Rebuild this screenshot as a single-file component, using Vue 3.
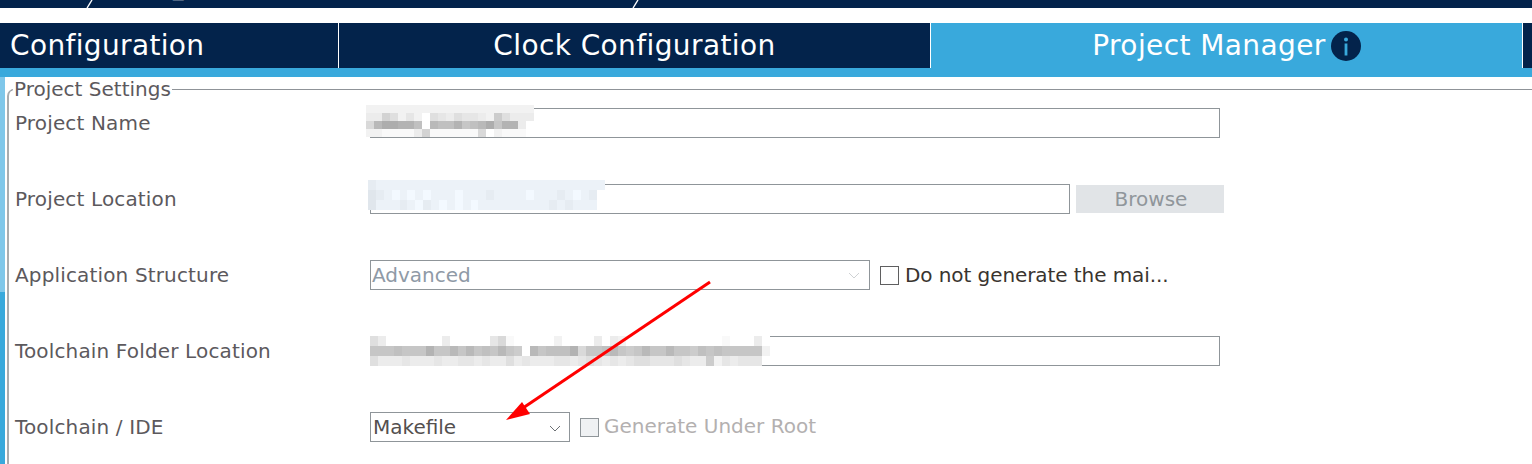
<script setup>
// blurred-out values: each char is a lightness step, '.' is a see-through cell
const toGray = (ch) => Math.round(160 + parseInt(ch, 16) * 6.33)

const blurs = {
  name: {
    cls: 'blur--name',
    tint: 0,
    rows: [
      'ddddddddddddddddddddd',
      'cc8adbdfabcabbcd7accc',
      '9422335f45536542633cf',
      'ddeeeec8eeeeee9fdeeef',
    ],
  },
  location: {
    cls: 'blur--location',
    tint: 6,
    rows: [
      'cddddddddddddddddddddddddddddd',
      'bcdedededddedddcddddedddcdedc.',
      'bdddcdecdedededddddddddcdcddd.',
    ],
  },
  toolchain: {
    cls: 'blur--toolchain',
    tint: 0,
    rows: [
      'acfffffffcfffffb9efffffdffffcfcdffffffffffffefffcf',
      '6665666366464656467f46555396654676466466756566666d',
      'acccbcccbccbbcbccacbcccbbcbabcbcbaabbbabcc7dbcbbb.',
    ],
  },
}

const cellColor = (ch, tint) => {
  if (ch === '.') return 'transparent'
  const g = toGray(ch)
  return `rgb(${g - tint}, ${g}, ${Math.min(255, g + tint)})`
}
</script>

<template>
  <div class="page">
    <div class="crumbs">
      <svg class="crumbs__chevron" width="8" height="8" viewBox="0 0 8 8"><path d="M6 0 L1 8" /></svg>
      <span class="crumbs__text">led_blinkpwm.ioc - Project <span class="crumbs__last">Manager</span></span>
      <svg class="crumbs__chevron crumbs__chevron--end" width="8" height="8" viewBox="0 0 8 8"><path d="M6 0 L1 8" /></svg>
    </div>

    <nav class="tabs">
      <div class="tab tab--config">Configuration</div>
      <div class="tab tab--clock">Clock Configuration</div>
      <div class="tab tab--active">
        <span>Project Manager</span>
        <svg class="tab__info" width="30" height="30" viewBox="0 0 30 30">
          <ellipse cx="15" cy="15" rx="15" ry="15" fill="#03234b" />
          <circle cx="15" cy="8.5" r="2" fill="#39a9dc" />
          <rect x="13.6" y="12.5" width="2.8" height="12" fill="#39a9dc" />
        </svg>
      </div>
      <div class="tab tab--rest"></div>
    </nav>
    <div class="tabs-strip"></div>

    <div class="body">
      <div class="rail">
        <div class="rail__top"></div>
        <div class="rail__bottom"></div>
      </div>

      <fieldset class="settings">
        <legend class="settings__legend">Project Settings</legend>

        <div class="row">
          <label class="row__label">Project Name</label>
          <div class="field field--wide">
            <div :class="['blur', blurs.name.cls]">
              <div v-for="(row, r) in blurs.name.rows" :key="r" class="blur__row">
                <span v-for="(c, i) in row" :key="i" class="blur__cell" :style="{ background: cellColor(c, blurs.name.tint) }"></span>
              </div>
            </div>
          </div>
        </div>

        <div class="row">
          <label class="row__label">Project Location</label>
          <div class="field field--location">
            <div :class="['blur', blurs.location.cls]">
              <div v-for="(row, r) in blurs.location.rows" :key="r" class="blur__row">
                <span v-for="(c, i) in row" :key="i" class="blur__cell" :style="{ background: cellColor(c, blurs.location.tint) }"></span>
              </div>
            </div>
          </div>
          <button class="browse" type="button">Browse</button>
        </div>

        <div class="row">
          <label class="row__label">Application Structure</label>
          <div class="field field--advanced select">
            <span class="select__value select__value--off">Advanced</span>
            <svg class="select__arrow" width="12" height="7" viewBox="0 0 12 7"><path d="M1 1 L6 6 L11 1" stroke="#cfd2d4" /></svg>
          </div>
          <span class="check"></span>
          <span class="check__label">Do not generate the mai...</span>
        </div>

        <div class="row">
          <label class="row__label">Toolchain Folder Location</label>
          <div class="field field--wide">
            <div :class="['blur', blurs.toolchain.cls]">
              <div v-for="(row, r) in blurs.toolchain.rows" :key="r" class="blur__row">
                <span v-for="(c, i) in row" :key="i" class="blur__cell" :style="{ background: cellColor(c, blurs.toolchain.tint) }"></span>
              </div>
            </div>
          </div>
        </div>

        <div class="row">
          <label class="row__label">Toolchain / IDE</label>
          <div class="field field--ide select">
            <span class="select__value">Makefile</span>
            <svg class="select__arrow select__arrow--ide" width="12" height="7" viewBox="0 0 12 7"><path d="M1 1 L6 6 L11 1" stroke="#6c7074" /></svg>
          </div>
          <span class="check check--off"></span>
          <span class="check__label check__label--off">Generate Under Root</span>
        </div>
      </fieldset>
    </div>

    <svg class="arrow" width="1532" height="464" viewBox="0 0 1532 464">
      <line x1="710" y1="282" x2="520" y2="410" stroke="#ff0000" stroke-width="3" />
      <polygon points="506,420 522,402 530,414" fill="#ff0000" />
    </svg>
  </div>
</template>

<style scoped>
.page {
  position: relative;
  width: 1532px;
  height: 464px;
  overflow: hidden;
  background: #ffffff;
  font-family: "DejaVu Sans", sans-serif;
}

.crumbs {
  display: flex;
  height: 8px;
  overflow: hidden;
  background: #03234b;
  color: #ffffff;
  padding-left: 86px;
}

.crumbs__chevron {
  flex: none;
  fill: none;
  stroke: #ffffff;
  stroke-width: 1.4;
}

.crumbs__chevron--end {
  position: absolute;
  left: 632px;
  top: 0;
}

.crumbs__text {
  flex: none;
  margin: -24px 0 0 47px;
  font-size: 21px;
  line-height: 24px;
  white-space: nowrap;
}

.crumbs__last {
  margin-left: 8px;
}

.tabs {
  display: flex;
  height: 45px;
  margin-top: 15px;
  background: #03234b;
  color: #ffffff;
  font-size: 28px;
  letter-spacing: 0.4px;
}

.tab {
  display: flex;
  align-items: center;
  justify-content: center;
  white-space: nowrap;
  border-right: 1px solid #ffffff;
}

.tab--config {
  width: 339px;
  justify-content: flex-start;
  padding-left: 10px;
  box-sizing: border-box;
  letter-spacing: 0.35px;
}

.tab--clock {
  width: 592px;
  box-sizing: border-box;
}

.tab--active {
  width: 592px;
  box-sizing: border-box;
  gap: 5px;
  background: #39a9dc;
}

.tab--rest {
  flex: 1;
  border-right: none;
}

.tab__info {
  flex: none;
}

.tabs-strip {
  height: 9px;
  background: #39a9dc;
}

.body {
  display: flex;
  height: 387px;
}

.rail {
  display: flex;
  flex-direction: column;
  flex: none;
  width: 5px;
}

.rail__top {
  height: 215px;
  background: #7fc7ea;
}

.rail__bottom {
  flex: 1;
  background: #39a9dc;
}

.settings {
  flex: 1;
  min-width: 0;
  margin: 0 0 0 2px;
  padding: 7px 0 0 6px;
  border: none;
  border-top: 1px solid #8f9398;
  border-left: 2px solid #a9acaf;
  border-top-left-radius: 7px;
}

.settings__legend {
  margin-left: -2px;
  padding: 0 1px;
  font-size: 20px;
  line-height: 24px;
  color: #5c595d;
}

.row {
  display: flex;
  align-items: center;
  height: 30px;
  margin-bottom: 46px;
}

.row__label {
  flex: none;
  width: 355px;
  font-size: 20px;
  letter-spacing: 0.15px;
  color: #5c595d;
}

.field {
  position: relative;
  flex: none;
  box-sizing: border-box;
  height: 30px;
  border: 1px solid #8f9599;
  background: #ffffff;
}

.field--wide {
  width: 850px;
}

.field--location {
  width: 700px;
}

.field--advanced {
  width: 500px;
  padding-left: 1px;
}

.field--ide {
  width: 200px;
}

.select {
  display: flex;
  align-items: center;
}

.field--ide.select {
  padding-left: 2px;
}

.select__value {
  font-size: 20px;
  color: #54504f;
}

.select__value--off {
  color: #8f9aa6;
}

.select__arrow {
  position: absolute;
  right: 9px;
  top: 11px;
  fill: none;
  stroke-width: 1;
}

.select__arrow--ide {
  right: 8px;
  top: 12px;
}

.blur {
  position: absolute;
}

.blur--name {
  left: -5px;
  top: -4px;
}

.blur--location {
  left: -3px;
  top: -5px;
}

.blur--toolchain {
  left: -1px;
  top: -1px;
}

.blur__row {
  display: flex;
  height: 8px;
}

.blur--location .blur__row,
.blur--toolchain .blur__row {
  height: 10px;
}

.blur__cell {
  flex: none;
  width: 8px;
}

.blur--location .blur__cell {
  width: 7.9px;
}

.browse {
  flex: none;
  width: 148px;
  height: 28px;
  margin-left: 6px;
  border: none;
  padding: 0 0 0 2px;
  background: #e1e4e7;
  color: #90969b;
  font-family: inherit;
  font-size: 20px;
}

.check {
  flex: none;
  box-sizing: border-box;
  width: 19px;
  height: 19px;
  margin-left: 10px;
  border: 1px solid #5f5f60;
  background: #ffffff;
}

.check--off {
  border-color: #8f9599;
  background: #eff1f3;
}

.check__label {
  margin-left: 6px;
  font-size: 20px;
  letter-spacing: -0.08px;
  color: #39342f;
  white-space: nowrap;
}

.check__label--off {
  margin: -2px 0 0 5px;
  letter-spacing: 0;
  color: #b3b0b0;
}

.arrow {
  position: absolute;
  left: 0;
  top: 0;
  pointer-events: none;
}
</style>
